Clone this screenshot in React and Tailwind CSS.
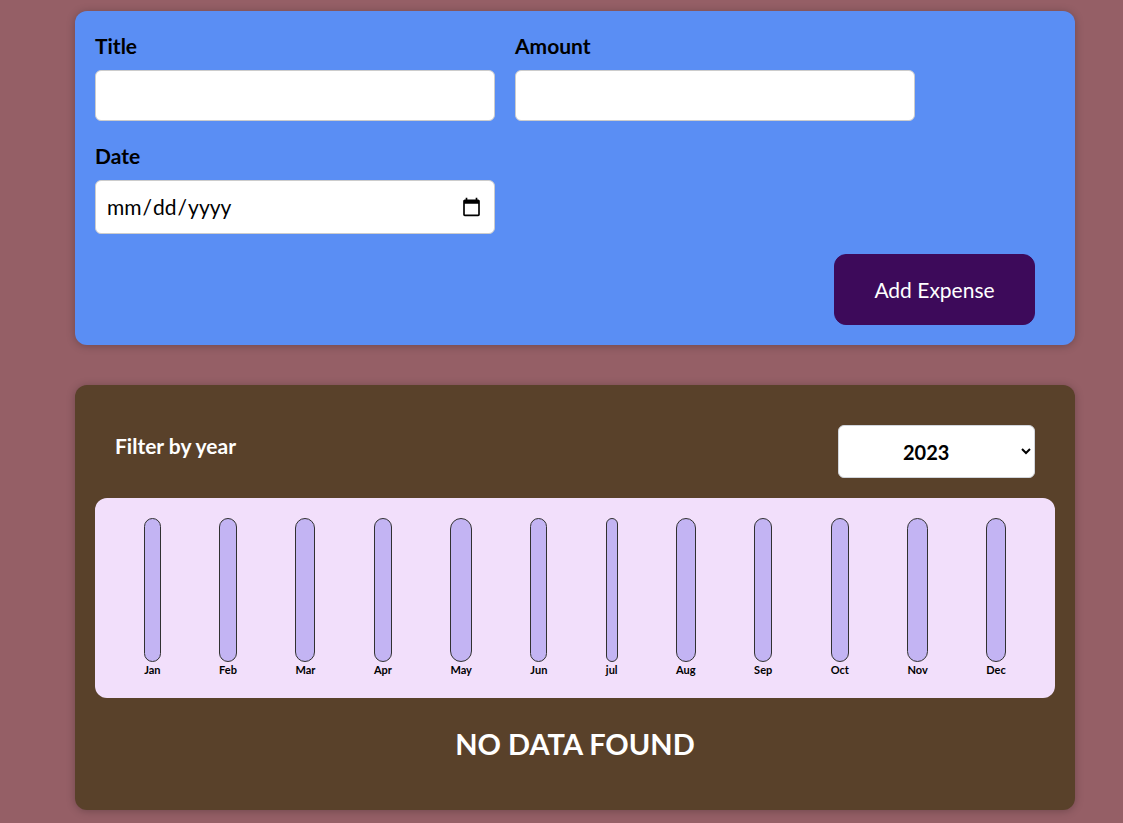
import { useState } from 'react';

const months = ['Jan', 'Feb', 'Mar', 'Apr', 'May', 'Jun', 'jul', 'Aug', 'Sep', 'Oct', 'Nov', 'Dec'];

function ExpenseForm() {
  return (
    <form className="w-[1000px] ml-[75px] p-5 rounded-xl bg-[#5a8ef4] shadow-[0_1px_8px_rgba(0,0,0,0.25)]">
      <div className="flex flex-wrap gap-5 mb-5">
        <div>
          <label className="block text-[21px] font-bold mb-2.5 leading-[29px]">Title</label>
          <input type="text" className="w-[400px] h-[51px] px-2.5 rounded-md border border-[#ccc] bg-white" />
        </div>
        <div>
          <label className="block text-[21px] font-bold mb-2.5 leading-[29px]">Amount</label>
          <input type="number" className="w-[400px] h-[51px] px-2.5 rounded-md border border-[#ccc] bg-white" />
        </div>
        <div>
          <label className="block text-[21px] font-bold mb-2.5 leading-[29px]">Date</label>
          <input type="date" className="w-[400px] h-[54px] px-2.5 rounded-md border border-[#ccc] bg-white text-[21px]" />
        </div>
      </div>
      <div className="flex justify-end">
        <button type="button" className="mr-5 w-[201px] h-[71px] rounded-xl bg-[#3d0a5a] border border-[#3d0a5a] text-white text-[21px]">
          Add Expense
        </button>
      </div>
    </form>
  );
}

function Chart() {
  return (
    <div className="h-[200px] p-5 rounded-xl bg-[#f2dffb] flex justify-around">
      {months.map((m) => (
        <div key={m} className="h-full flex flex-col items-center">
          <div className="flex-1 w-full rounded-xl border border-[#313131] bg-[#c3b4f3]" />
          <div className="text-[11px] font-bold leading-[16px] text-black">{m}</div>
        </div>
      ))}
    </div>
  );
}

export default function App() {
  const [year, setYear] = useState('2023');

  return (
    <div className="min-h-screen bg-[#955f66] pt-[11px] pb-10 text-[20px] text-black font-['Lato','Liberation_Sans',sans-serif]">
      <ExpenseForm />

      <div className="w-[1000px] ml-[75px] mt-10 p-5 rounded-xl bg-[#59412a] shadow-[0_1px_8px_rgba(0,0,0,0.25)]">
        <div className="px-5 text-white">
          <div className="flex items-center justify-between my-5">
            <label className="text-[21px] font-bold mb-3">Filter by year</label>
            <select
              value={year}
              onChange={(e) => setYear(e.target.value)}
              className="w-[197px] h-[53px] pl-[60px] pr-2 rounded-md border border-gray-300 bg-white text-black font-bold"
            >
              <option value="2023">2023</option>
              <option value="2022">2022</option>
              <option value="2021">2021</option>
              <option value="2020">2020</option>
            </select>
          </div>
        </div>

        <Chart />

        <div className="h-[92px] flex items-center justify-center">
          <h2 className="text-[29px] font-bold text-white">NO DATA FOUND</h2>
        </div>
      </div>
    </div>
  );
}
